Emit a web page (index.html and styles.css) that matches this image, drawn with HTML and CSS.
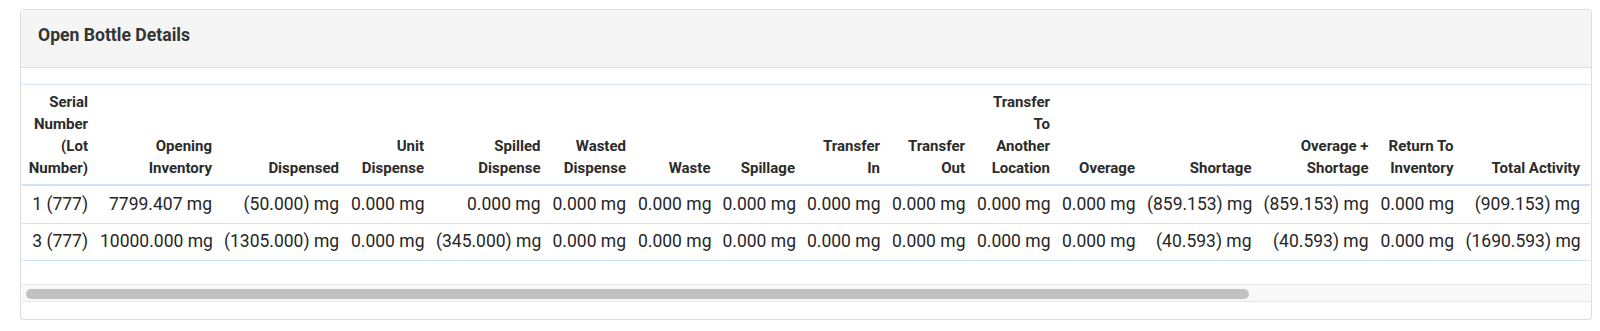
FILE: index.html
```html
<!DOCTYPE html>
<html lang="en">
<head>
<meta charset="utf-8">
<title>Open Bottle Details</title>
<link rel="stylesheet" href="styles.css">
</head>
<body>
<div class="page">
  <div class="panel">
    <div class="panel-heading">
      <h3 class="panel-title">Open Bottle Details</h3>
    </div>
    <div class="panel-body">
      <div class="table-wrap">
        <table class="details">
          <colgroup>
            <col><col><col><col><col><col><col><col><col><col><col><col><col><col><col><col>
          </colgroup>
          <thead>
            <tr>
              <th>Serial Number (Lot Number)</th>
              <th>Opening Inventory</th>
              <th>Dispensed</th>
              <th>Unit Dispense</th>
              <th>Spilled Dispense</th>
              <th>Wasted Dispense</th>
              <th>Waste</th>
              <th>Spillage</th>
              <th>Transfer In</th>
              <th>Transfer Out</th>
              <th>Transfer To Another Location</th>
              <th>Overage</th>
              <th>Shortage</th>
              <th>Overage + Shortage</th>
              <th>Return To Inventory</th>
              <th>Total Activity</th>
            </tr>
          </thead>
          <tbody>
            <tr>
              <td>1 (777)</td>
              <td>7799.407 mg</td>
              <td>(50.000) mg</td>
              <td>0.000 mg</td>
              <td>0.000 mg</td>
              <td>0.000 mg</td>
              <td>0.000 mg</td>
              <td>0.000 mg</td>
              <td>0.000 mg</td>
              <td>0.000 mg</td>
              <td>0.000 mg</td>
              <td>0.000 mg</td>
              <td>(859.153) mg</td>
              <td>(859.153) mg</td>
              <td>0.000 mg</td>
              <td>(909.153) mg</td>
            </tr>
            <tr>
              <td>3 (777)</td>
              <td>10000.000 mg</td>
              <td>(1305.000) mg</td>
              <td>0.000 mg</td>
              <td>(345.000) mg</td>
              <td>0.000 mg</td>
              <td>0.000 mg</td>
              <td>0.000 mg</td>
              <td>0.000 mg</td>
              <td>0.000 mg</td>
              <td>0.000 mg</td>
              <td>0.000 mg</td>
              <td>(40.593) mg</td>
              <td>(40.593) mg</td>
              <td>0.000 mg</td>
              <td>(1690.593) mg</td>
            </tr>
          </tbody>
        </table>
      </div>
      <div class="hscroll"><div class="hscroll-thumb"></div></div>
    </div>
  </div>
</div>
</body>
</html>
```

FILE: styles.css
```css
html, body {
  margin: 0;
  padding: 0;
  background: #ffffff;
}

body {
  font-family: Roboto, "Liberation Sans", Arial, sans-serif;
  color: #333333;
}

.page {
  padding: 9px 8px 0 20px;
}

.panel {
  background: #ffffff;
  border: 1px solid #dddddd;
  border-radius: 4px;
  box-shadow: 0 1px 1px rgba(0, 0, 0, 0.05);
}

.panel-heading {
  background: #f5f5f5;
  border-bottom: 1px solid #dddddd;
  border-radius: 3px 3px 0 0;
  padding: 15px 17px 22px;
}

.panel-title {
  margin: 0;
  font-size: 17.6px;
  line-height: 20px;
  font-weight: 700;
  color: #333333;
}

.panel-body {
  padding: 16px 1px 17px;
}

.table-wrap {
  border-top: 1px solid #d5e5f9;
  overflow: hidden;
}

.details {
  width: 1568px;
  table-layout: fixed;
  border-collapse: separate;
  border-spacing: 0;
}

.details col:nth-child(1) { width: 72px; }
.details col:nth-child(2) { width: 124px; }
.details col:nth-child(3) { width: 127px; }
.details col:nth-child(4) { width: 85px; }
.details col:nth-child(5) { width: 116.5px; }
.details col:nth-child(6) { width: 85.5px; }
.details col:nth-child(7) { width: 84.5px; }
.details col:nth-child(8) { width: 84.5px; }
.details col:nth-child(9) { width: 85px; }
.details col:nth-child(10) { width: 85px; }
.details col:nth-child(11) { width: 85px; }
.details col:nth-child(12) { width: 85px; }
.details col:nth-child(13) { width: 116.5px; }
.details col:nth-child(14) { width: 117px; }
.details col:nth-child(15) { width: 85px; }
.details col:nth-child(16) { width: 130.5px; }

.details th {
  padding: 5.5px 6px;
  font-size: 15px;
  line-height: 22px;
  font-weight: 700;
  color: #2b2b2b;
  text-align: right;
  vertical-align: bottom;
  border-bottom: 2px solid #cfe1f8;
}

.details td {
  padding: 5.75px 6px;
  font-size: 17.5px;
  line-height: 25px;
  color: #262626;
  text-align: right;
  white-space: nowrap;
  border-bottom: 1px solid #cfe1f8;
}

.details th:last-child,
.details td:last-child {
  padding-right: 10px;
}

.hscroll {
  margin-top: 23px;
  height: 12px;
  padding: 4px 0 0 4px;
  background: #f8f8f8;
  border-top: 1px solid #e6e6e6;
  border-bottom: 1px solid #e6e6e6;
}

.hscroll-thumb {
  width: 1223px;
  height: 10px;
  border-radius: 5px;
  background: #c1c1c1;
}
```
